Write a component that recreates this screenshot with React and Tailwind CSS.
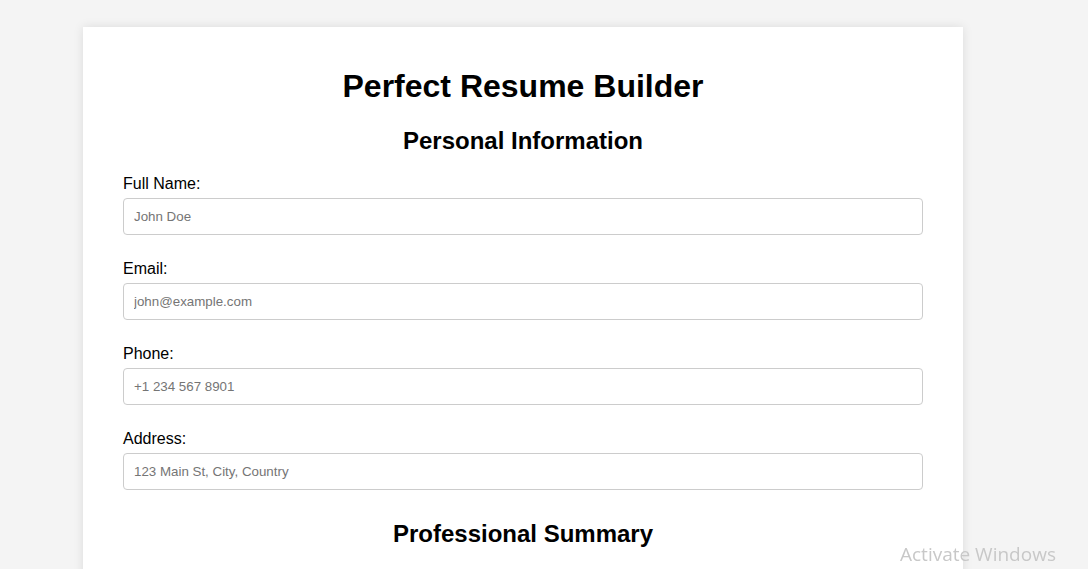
export default function App() {
  const fields = [
    { label: "Full Name:", placeholder: "John Doe", type: "text" },
    { label: "Email:", placeholder: "john@example.com", type: "email" },
    { label: "Phone:", placeholder: "+1 234 567 8901", type: "tel" },
    { label: "Address:", placeholder: "123 Main St, City, Country", type: "text" },
  ];

  return (
    <div className="min-h-screen bg-[#f4f4f4] pt-[27px] font-['Liberation_Sans',Arial,sans-serif] text-black">
      <div className="ml-[83px] w-[880px] bg-white px-10 pt-[41px] pb-10 shadow-[0_0_10px_rgba(0,0,0,0.1)]">
        <h1 className="m-0 text-center text-[32px] font-bold leading-[37px]">Perfect Resume Builder</h1>

        <h2 className="mt-[22px] text-center text-[24px] font-bold leading-[28px]">Personal Information</h2>

        <div className="mt-[20px]">
          {fields.map((f) => (
            <div key={f.label} className="mb-[25px]">
              <label className="block text-[16px] leading-[18px]">{f.label}</label>
              <input
                type={f.type}
                placeholder={f.placeholder}
                className="mt-[5px] block h-[37px] w-full rounded-[4px] border border-[#ccc] px-[10px] text-[13.33px] placeholder:text-[#757575] outline-none"
              />
            </div>
          ))}
        </div>

        <h2 className="mt-[30px] text-center text-[24px] font-bold leading-[28px]">Professional Summary</h2>
      </div>

      <div className="fixed left-[900px] top-[541px] font-['Open_Sans',sans-serif] text-[19px] text-[#c8c8c8] leading-[26px] pointer-events-none">
        Activate Windows
      </div>
    </div>
  );
}
